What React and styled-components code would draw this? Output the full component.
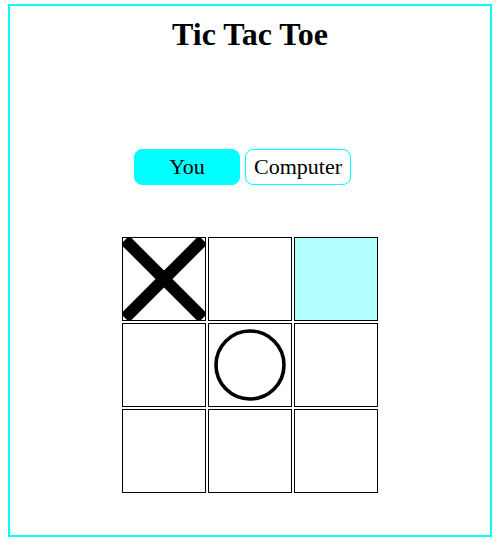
import React from "react";
import styled, { createGlobalStyle } from "styled-components";

const Global = createGlobalStyle`
  body {
    margin: 4px 8px 0 8px;
    background: #ffffff;
    font-family: "Liberation Serif", "Times New Roman", serif;
  }
  button {
    font-family: "Liberation Serif", "Times New Roman", serif;
  }
`;

const Frame = styled.div`
  box-sizing: border-box;
  width: 484px;
  height: 533px;
  border: 2px solid #00ffff;
  padding-top: 10px;
  display: flex;
  flex-direction: column;
  align-items: center;
`;

const Title = styled.h1`
  margin: 0;
  font-size: 32px;
  line-height: 37px;
  font-weight: bold;
  color: #000;
  text-align: center;
`;

const ButtonRow = styled.div`
  margin-top: 96px;
  display: flex;
  gap: 5px;
  padding-right: 15px;
`;

const ChoiceButton = styled.button`
  box-sizing: border-box;
  width: 106px;
  height: 36px;
  padding: 0;
  border: 1px solid #00ffff;
  border-radius: 8px;
  background: ${(p) => (p.$active ? "#00ffff" : "#ffffff")};
  color: #000;
  font-family: "Liberation Serif", "Times New Roman", serif;
  font-size: 22px;
  cursor: pointer;
`;

const Board = styled.div`
  margin-top: 52px;
  display: grid;
  grid-template-columns: repeat(3, 84px);
  grid-auto-rows: 84px;
  gap: 2px;
`;

const Cell = styled.div`
  box-sizing: border-box;
  border: 1px solid #000;
  background: ${(p) => (p.$highlight ? "rgba(0,255,255,0.3)" : "#ffffff")};
  overflow: hidden;
  display: flex;
  align-items: center;
  justify-content: center;
`;

const Mark = styled.svg`
  display: block;
  width: 82px;
  height: 82px;
  filter: ${(p) => (p.$soft ? "blur(0.6px)" : "none")};
`;

const Cross = () => (
  <Mark viewBox="0 0 82 82">
    <line x1="2" y1="2" x2="80" y2="80" stroke="#000" strokeWidth="12" />
    <line x1="80" y1="2" x2="2" y2="80" stroke="#000" strokeWidth="12" />
  </Mark>
);

const Nought = () => (
  <Mark viewBox="0 0 82 82" $soft>
    <circle cx="41" cy="41" r="34" fill="none" stroke="#000" strokeWidth="3.6" />
  </Mark>
);

const cells = ["X", "", "H", "", "O", "", "", "", ""];

export default function App() {
  return (
    <>
      <Global />
      <Frame>
        <Title>Tic Tac Toe</Title>
        <ButtonRow>
          <ChoiceButton $active>You</ChoiceButton>
          <ChoiceButton>Computer</ChoiceButton>
        </ButtonRow>
        <Board>
          {cells.map((c, i) => (
            <Cell key={i} $highlight={c === "H"}>
              {c === "X" && <Cross />}
              {c === "O" && <Nought />}
            </Cell>
          ))}
        </Board>
      </Frame>
    </>
  );
}
